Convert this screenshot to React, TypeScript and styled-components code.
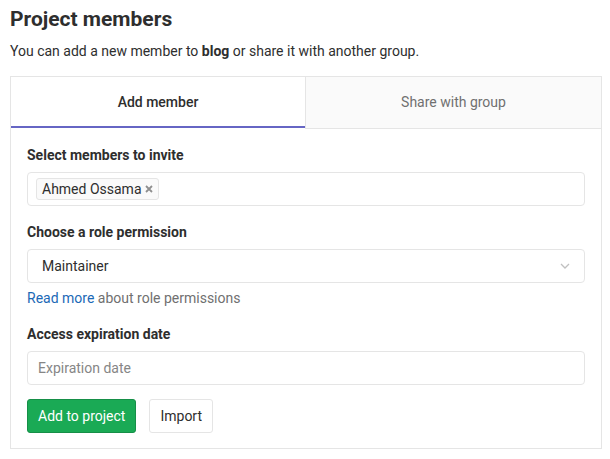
import React from "react";
import styled, { createGlobalStyle } from "styled-components";

const Global = createGlobalStyle`
  html, body { margin: 0; padding: 0; background: #fff; }
  body { font-family: Roboto, "Liberation Sans", Arial, sans-serif; font-size: 14px; color: #2e2e2e; }
  * { box-sizing: border-box; }
`;

const Page = styled.div`
  padding: 7px 8px 0 10px;
`;

const Title = styled.h1`
  margin: 0;
  font-size: 21px;
  line-height: 24px;
  font-weight: 700;
  color: #2e2e2e;
`;

const Intro = styled.p`
  margin: 10px 0 15px;
  line-height: 20px;
  b { font-weight: 700; }
`;

const Panel = styled.div`
  border: 1px solid #e5e5e5;
  background: #fff;
`;

const TabList = styled.div`
  display: flex;
`;

const Tab = styled.div<{ $active?: boolean }>`
  height: 52px;
  display: flex;
  align-items: center;
  justify-content: center;
  font-size: 14px;
  padding-bottom: 1px;
  font-weight: ${(p) => (p.$active ? 500 : 400)};
  color: ${(p) => (p.$active ? "#2e2e2e" : "#707070")};
  background: ${(p) => (p.$active ? "#fff" : "#fafafa")};
  border-bottom: 1px solid ${(p) => (p.$active ? "#fff" : "#e5e5e5")};
  border-left: ${(p) => (p.$active ? "none" : "1px solid #e5e5e5")};
  box-shadow: ${(p) => (p.$active ? "inset 0 -2px 0 #6666c4" : "none")};
  flex-basis: ${(p) => (p.$active ? "294px" : "auto")};
  flex-grow: ${(p) => (p.$active ? 0 : 1)};
`;

const Body = styled.div`
  padding: 16px 16px 15px;
`;

const Group = styled.div<{ $mb?: number }>`
  margin-bottom: ${(p) => p.$mb ?? 16}px;
`;

const Label = styled.div`
  font-weight: 700;
  line-height: 20px;
  margin-bottom: 7px;
`;

const Field = styled.div`
  height: 34px;
  border: 1px solid #e5e5e5;
  border-radius: 4px;
  display: flex;
  align-items: center;
  padding: 0 8px;
  background: #fff;
`;

const Chip = styled.span`
  display: inline-flex;
  align-items: center;
  gap: 3px;
  height: 22px;
  padding: 0 5px 0 5px;
  background: #fafafa;
  border: 1px solid #e5e5e5;
  border-radius: 3px;
  color: #2e2e2e;
`;

const Select = styled(Field)`
  padding: 0 14px 0 14px;
  justify-content: space-between;
`;

const Placeholder = styled.span`
  color: #868686;
  margin-left: 2px;
`;

const Help = styled.div`
  margin-top: 5px;
  line-height: 20px;
  color: #707070;
  a { color: #1b69b6; text-decoration: none; }
`;

const Actions = styled.div`
  display: flex;
  gap: 13px;
`;

const Button = styled.button<{ $primary?: boolean }>`
  height: 34px;
  padding: 0 10px;
  font-family: inherit;
  font-size: 14px;
  border-radius: 3px;
  border: 1px solid ${(p) => (p.$primary ? "#168f48" : "#e5e5e5")};
  background: ${(p) => (p.$primary ? "#1aaa55" : "#fff")};
  color: ${(p) => (p.$primary ? "#fff" : "#2e2e2e")};
`;

const Chevron = () => (
  <svg width="10" height="6" viewBox="0 0 10 6" fill="none">
    <path d="M1 1l4 4 4-4" stroke="#c0c0c0" strokeWidth="1.3" />
  </svg>
);

const RemoveIcon = () => (
  <svg width="8" height="8" viewBox="0 0 8 8" fill="none">
    <path d="M1 1l6 6M7 1L1 7" stroke="#8f8f8f" strokeWidth="1.8" />
  </svg>
);

export default function App() {
  return (
    <>
      <Global />
      <Page>
        <Title>Project members</Title>
        <Intro>
          You can add a new member to <b>blog</b> or share it with another group.
        </Intro>
        <Panel>
          <TabList>
            <Tab $active>Add member</Tab>
            <Tab>Share with group</Tab>
          </TabList>
          <Body>
            <Group>
              <Label>Select members to invite</Label>
              <Field>
                <Chip>
                  Ahmed Ossama <RemoveIcon />
                </Chip>
              </Field>
            </Group>
            <Group>
              <Label>Choose a role permission</Label>
              <Select>
                <span>Maintainer</span>
                <Chevron />
              </Select>
              <Help>
                <a href="#">Read more</a> about role permissions
              </Help>
            </Group>
            <Group $mb={14}>
              <Label>Access expiration date</Label>
              <Field>
                <Placeholder>Expiration date</Placeholder>
              </Field>
            </Group>
            <Actions>
              <Button $primary>Add to project</Button>
              <Button>Import</Button>
            </Actions>
          </Body>
        </Panel>
      </Page>
    </>
  );
}
